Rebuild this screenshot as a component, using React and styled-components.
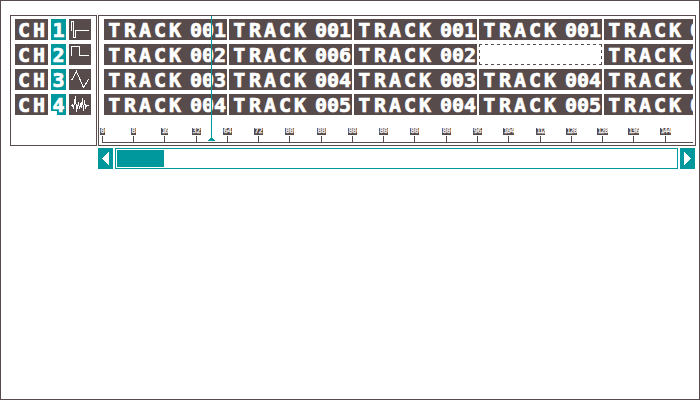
import React from "react";
import styled, { createGlobalStyle, css } from "styled-components";

const INK = "#574b4b";
const TEAL = "#00979d";
const PAPER = "#ffffff";

const GlobalStyle = createGlobalStyle`
  *, *::before, *::after { box-sizing: border-box; }
  body { margin: 0; background: ${PAPER}; }
`;

const Screen = styled.main`
  width: 700px;
  height: 400px;
  padding: 14px 0 0 9px;
  border: 1px solid ${INK};
  background: ${PAPER};
`;

const Sequencer = styled.div`
  display: flex;
  gap: 1px;
  align-items: flex-start;
`;

const panel = css`
  height: 131px;
  border: 1px solid ${INK};
`;

const ChannelPanel = styled.section`
  ${panel}
  width: 87px;
  padding: 3px 0 0 4px;
  display: flex;
  flex-direction: column;
  gap: 4px;
`;

const ChannelRow = styled.div`
  display: flex;
  gap: 3px;
  height: 21px;
`;

const blockText = css`
  height: 21px;
  font: bold 20px/23px "DejaVu Sans Mono", monospace;
  color: ${PAPER};
  -webkit-text-stroke: 0.7px ${PAPER};
  white-space: pre;
`;

const ChannelName = styled.div`
  ${blockText}
  width: 33px;
  padding-left: 3px;
  letter-spacing: 2.96px;
  background: ${INK};
`;

const ChannelNumber = styled.div`
  ${blockText}
  width: 15px;
  padding-left: 1.5px;
  background: ${TEAL};
  clip-path: ${(p) =>
    p.$notched ? "polygon(0 0, 100% 0, 100% 100%, 6px 100%, 6px 17px, 0 17px)" : "none"};
`;

const Wave = styled.svg`
  display: block;
  width: 22px;
  height: 21px;
  background: ${INK};
  fill: none;
  stroke: ${PAPER};
  shape-rendering: crispEdges;
`;

const RightColumn = styled.div`
  width: 598px;
  display: flex;
  flex-direction: column;
  gap: 2px;
`;

const TrackPanel = styled.section`
  ${panel}
  position: relative;
  width: 598px;
  padding: 3px 2px 0 5px;
`;

const ClipGrid = styled.div`
  display: grid;
  grid-template-columns: repeat(5, 123px);
  grid-auto-rows: 21px;
  gap: 4px 2px;
  width: 589px;
  height: 96px;
  overflow: hidden;
`;

const Clip = styled.div`
  ${blockText}
  display: flex;
  padding-left: 5px;
  background: ${INK};
`;

const ClipWord = styled.span`
  width: 81px;
  letter-spacing: 2.96px;
  &::first-letter {
    margin-left: -0.8px;
    margin-right: 0.8px;
  }
`;

const ClipNumber = styled.span`
  letter-spacing: -0.04px;
`;

const EmptyClip = styled.svg`
  display: block;
  width: 124px;
  height: 21px;
  fill: none;
  stroke: ${INK};
  stroke-dasharray: 3 3;
  shape-rendering: crispEdges;
`;

const Ruler = styled.div`
  display: flex;
  height: 15px;
  margin: 13px 0 0 -2px;
  width: 591px;
  border-bottom: 1px solid ${INK};
`;

const RulerCell = styled.div`
  flex: none;
  display: flex;
  flex-direction: column;
  align-items: center;
  gap: 1px;
  width: 1px;
  margin-right: ${(p) => p.$step - 1}px;
`;

const RulerLabel = styled.span`
  flex: none;
  width: ${(p) => p.$width}px;
  height: 7px;
  background: ${INK};
  color: ${PAPER};
  font: 7px/7px "DejaVu Sans Mono", monospace;
  -webkit-text-stroke: 0.25px ${PAPER};
  letter-spacing: ${(p) => p.$tracking}px;
  padding-left: 0.5px;
  white-space: nowrap;
`;

const Tick = styled.span`
  width: 1px;
  height: 6px;
  background: ${INK};
`;

const Playhead = styled.svg`
  position: absolute;
  left: 109px;
  top: 0;
  width: 7px;
  height: 125px;
  fill: ${TEAL};
  shape-rendering: crispEdges;
`;

const Scrollbar = styled.div`
  display: flex;
  gap: 2px;
  height: 21px;
`;

const ScrollButton = styled.button`
  width: 15px;
  height: 21px;
  padding: 0;
  border: 0;
  background: ${TEAL};
  svg {
    display: block;
    width: 15px;
    height: 21px;
    fill: ${PAPER};
    shape-rendering: crispEdges;
  }
`;

const ScrollTrack = styled.div`
  width: 563px;
  padding: 1px;
  border: 1px solid ${TEAL};
`;

const ScrollThumb = styled.div`
  width: 47px;
  height: 17px;
  background: ${TEAL};
`;

const channels = [
  { id: "1", wave: "2.5,12 2.5,2.5 4.5,2.5 4.5,18.5 6.5,18.5 6.5,11.5 20,11.5" },
  { id: "2", wave: "2.5,12 2.5,2.5 10.5,2.5 10.5,11.5 20,11.5" },
  { id: "3", wave: "2.5,11.5 7.5,2.5 14.5,18.5 19.5,10.5" },
  {
    id: "4",
    wave:
      "2,11.5 3.5,10.5 4.5,14.5 5.5,7.5 6.5,2.5 7.5,17.5 9.5,8.5 10.5,14.5 11.5,10.5 12.5,12.5 13.5,4.5 14.5,16.5 15.5,6.5 16.5,13.5 17.5,11.5 20,11.5",
  },
];

const rows = [
  ["001", "001", "001", "001", "0"],
  ["002", "006", "002", null, "0"],
  ["003", "004", "003", "004", "0"],
  ["004", "005", "004", "005", "0"],
];

// [label, box width, distance to the next tick]
const marks = [
  ["0", 5, 31], ["8", 5, 31], ["16", 7, 32], ["32", 9, 31], ["64", 9, 31],
  ["72", 9, 31], ["80", 9, 32], ["88", 9, 31], ["80", 9, 31], ["80", 9, 31],
  ["80", 9, 32], ["80", 9, 31], ["96", 9, 31], ["104", 11, 32], ["112", 9, 31],
  ["120", 11, 31], ["128", 11, 31], ["136", 11, 32], ["144", 11, 1],
];

const tracking = (label, width) => (width - 1) / label.length - 4.21;

export default function App() {
  return (
    <>
      <GlobalStyle />
      <Screen>
        <Sequencer>
          <ChannelPanel>
            {channels.map((c) => (
              <ChannelRow key={c.id}>
                <ChannelName>CH</ChannelName>
                <ChannelNumber $notched={c.id === "4"}>{c.id}</ChannelNumber>
                <Wave viewBox="0 0 22 21">
                  <polyline points={c.wave} />
                </Wave>
              </ChannelRow>
            ))}
          </ChannelPanel>
          <RightColumn>
            <TrackPanel>
              <ClipGrid>
                {rows.flatMap((row, r) =>
                  row.map((n, i) =>
                    n ? (
                      <Clip key={`${r}-${i}`}>
                        <ClipWord>TRACK</ClipWord>
                        <ClipNumber>{n}</ClipNumber>
                      </Clip>
                    ) : (
                      <EmptyClip key={`${r}-${i}`} viewBox="0 0 124 21">
                        <path d="M0 .5H123M122.5 0V21M0 20.5H123M.5 0V21" />
                      </EmptyClip>
                    )
                  )
                )}
              </ClipGrid>
              <Ruler>
                {marks.map(([label, width, step], i) => (
                  <RulerCell key={i} $step={step}>
                    <RulerLabel $width={width} $tracking={tracking(label, width)}>
                      {label}
                    </RulerLabel>
                    <Tick />
                  </RulerCell>
                ))}
              </Ruler>
              <Playhead viewBox="0 0 7 125">
                <path d="M3 0h1v125h-1zM2 122h3v1h1v1h1v1H0v-1h1v-1h1z" />
              </Playhead>
            </TrackPanel>
            <Scrollbar>
              <ScrollButton aria-label="Scroll left">
                <svg viewBox="0 0 15 21">
                  <path d="M4 10.5 11 3.5V17.5Z" />
                </svg>
              </ScrollButton>
              <ScrollTrack>
                <ScrollThumb />
              </ScrollTrack>
              <ScrollButton aria-label="Scroll right">
                <svg viewBox="0 0 15 21">
                  <path d="M11 10.5 4 3.5V17.5Z" />
                </svg>
              </ScrollButton>
            </Scrollbar>
          </RightColumn>
        </Sequencer>
      </Screen>
    </>
  );
}
